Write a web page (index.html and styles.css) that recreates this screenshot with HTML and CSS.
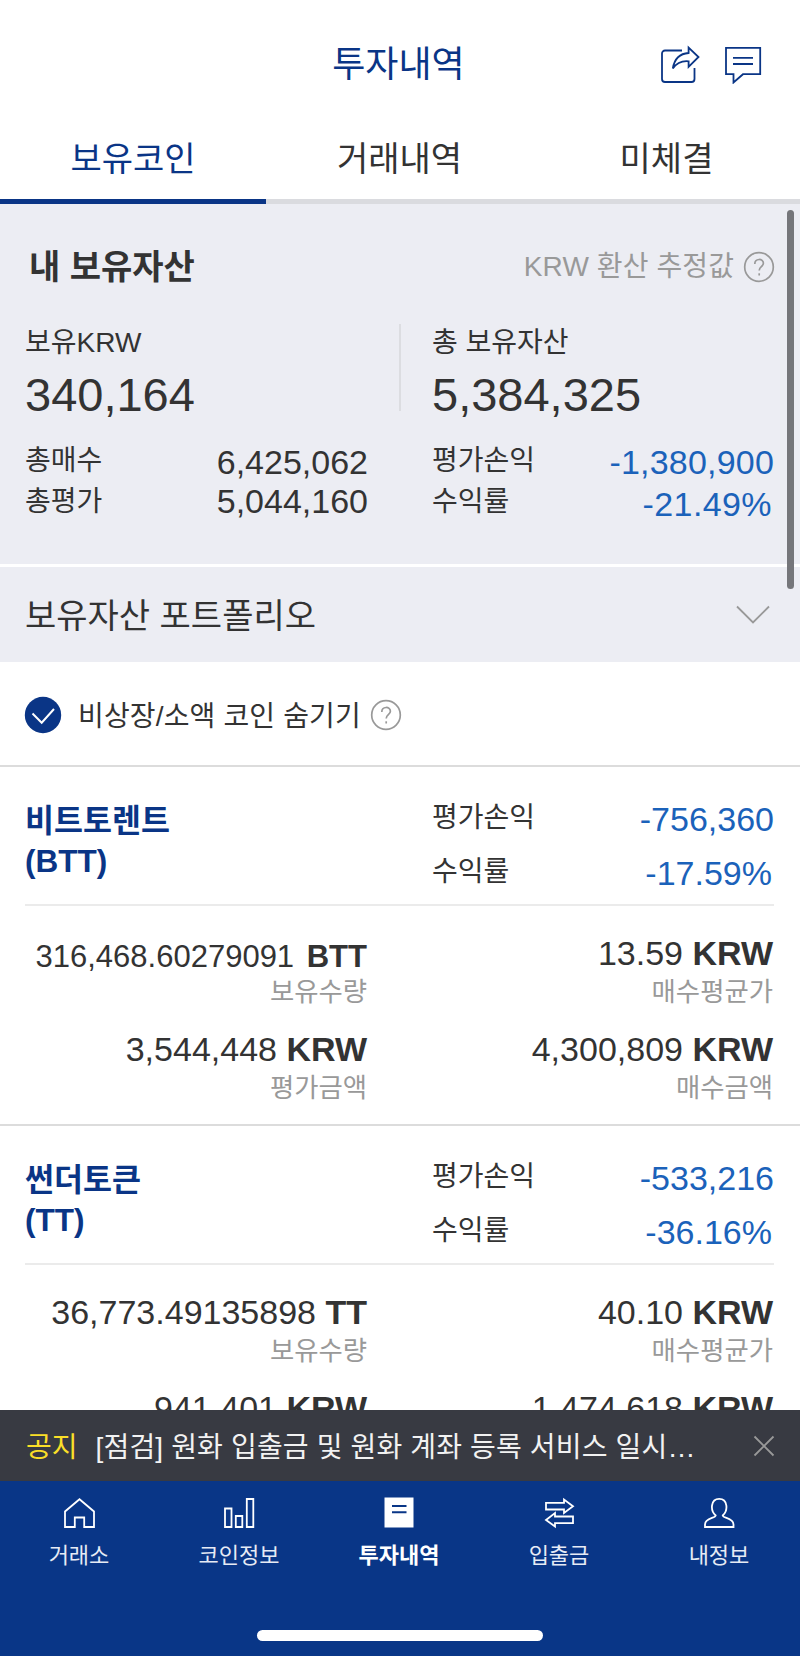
FILE: index.html
```html
<!DOCTYPE html>
<html lang="ko">

<head>
    <meta charset="UTF-8">
    <meta name="viewport" content="width=device-width, initial-scale=1.0">
    <title>투자내역</title>
    <link rel="stylesheet" href="styles.css">
</head>

<body>
    <header class="header">
        <h1 class="title">투자내역</h1>
        <div class="actions">
            <svg class="icon" width="40" height="40" viewBox="0 0 40 40">
                <path d="M22 6.500H5a3 3 0 0 0-3 3V35a3 3 0 0 0 3 3h26.500a3 3 0 0 0 3-3V24" />
                <path d="M12.800 24.500C14.500 14.500 20 9.500 28.600 9V3.500L38.500 13l-9.900 9.800v-5.500C21.500 16.600 17 18.500 12.800 24.500z" />
            </svg>
            <svg class="icon" width="40" height="40" viewBox="0 0 40 40">
                <path d="M2 3.800h34.200v26.400H19l-9.500 8.300v-8.300H2z" />
                <path d="M9 13.800h20M9 20h20" />
            </svg>
        </div>
    </header>

    <nav class="tabs">
        <a class="tab active">보유코인</a>
        <a class="tab">거래내역</a>
        <a class="tab">미체결</a>
    </nav>

    <main class="content">
        <section class="summary">
            <div class="summary-head">
                <h2>내 보유자산</h2>
                <span class="estimate">KRW 환산 추정값
                    <svg class="help" width="32" height="32" viewBox="0 0 32 32">
                        <circle cx="16" cy="16" r="14.300" />
                        <path d="M11.800 13c0-6 8.600-5.800 8.600-.8 0 3.500-4.200 3.500-4.200 7.300" />
                        <path d="M16.200 22.300v2.200" />
                    </svg>
                </span>
            </div>
            <div class="summary-grid">
                <div class="summary-col">
                    <div class="label">보유KRW</div>
                    <div class="total">340,164</div>
                    <div class="line"><span>총매수</span><b>6,425,062</b></div>
                    <div class="line second"><span>총평가</span><b>5,044,160</b></div>
                </div>
                <div class="separator"></div>
                <div class="summary-col">
                    <div class="label">총 보유자산</div>
                    <div class="total">5,384,325</div>
                    <div class="line"><span>평가손익</span><b class="down">-1,380,900</b></div>
                    <div class="line second"><span>수익률</span><b class="down rate">-21.49%</b></div>
                </div>
            </div>
        </section>

        <section class="portfolio">
            <span>보유자산 포트폴리오</span>
            <svg class="chevron" width="36" height="20" viewBox="0 0 36 20">
                <path d="M2 1.500l16 16 16-16" />
            </svg>
        </section>

        <div class="filter">
            <svg class="check" width="38" height="38" viewBox="0 0 38 38">
                <circle cx="19" cy="19" r="18.200" />
                <path d="M8.500 17.500l9.200 9.200L30 13" />
            </svg>
            <span>비상장/소액 코인 숨기기</span>
            <svg class="help" width="32" height="32" viewBox="0 0 32 32">
                <circle cx="16" cy="16" r="14.300" />
                <path d="M11.800 13c0-6 8.600-5.800 8.600-.8 0 3.500-4.200 3.500-4.200 7.300" />
                <path d="M16.200 22.300v2.200" />
            </svg>
        </div>

        <article class="coin">
            <div class="coin-head">
                <h3>비트토렌트<br>(BTT)</h3>
                <div class="profit">
                    <div class="row"><span>평가손익</span><b>-756,360</b></div>
                    <div class="row"><span>수익률</span><b class="rate">-17.59%</b></div>
                </div>
            </div>
            <div class="coin-body">
                <div class="cell">
                    <div class="amount small">316,468.60279091 <strong>BTT</strong></div>
                    <div class="caption">보유수량</div>
                </div>
                <div class="cell">
                    <div class="amount">13.59 <strong>KRW</strong></div>
                    <div class="caption">매수평균가</div>
                </div>
                <div class="cell">
                    <div class="amount">3,544,448 <strong>KRW</strong></div>
                    <div class="caption">평가금액</div>
                </div>
                <div class="cell">
                    <div class="amount">4,300,809 <strong>KRW</strong></div>
                    <div class="caption">매수금액</div>
                </div>
            </div>
        </article>

        <article class="coin">
            <div class="coin-head">
                <h3>썬더토큰<br>(TT)</h3>
                <div class="profit">
                    <div class="row"><span>평가손익</span><b>-533,216</b></div>
                    <div class="row"><span>수익률</span><b class="rate">-36.16%</b></div>
                </div>
            </div>
            <div class="coin-body">
                <div class="cell">
                    <div class="amount">36,773.49135898 <strong>TT</strong></div>
                    <div class="caption">보유수량</div>
                </div>
                <div class="cell">
                    <div class="amount">40.10 <strong>KRW</strong></div>
                    <div class="caption">매수평균가</div>
                </div>
                <div class="cell">
                    <div class="amount">941,401 <strong>KRW</strong></div>
                </div>
                <div class="cell">
                    <div class="amount">1,474,618 <strong>KRW</strong></div>
                </div>
            </div>
        </article>

        <div class="scrollbar"></div>
    </main>

    <div class="notice">
        <span class="notice-tag">공지</span>
        <span class="notice-text">[점검] 원화 입출금 및 원화 계좌 등록 서비스 일시…</span>
        <svg class="close" width="22" height="22" viewBox="0 0 22 22">
            <path d="M1.500 1.500l19 19M20.500 1.500l-19 19" />
        </svg>
    </div>

    <footer class="bottom">
        <nav class="menu">
            <a class="menu-item">
                <svg width="32" height="32" viewBox="0 0 32 32">
                    <path d="M2 30V14.500L16.500 2.200 31 14.500V30H21.200V20.500H11.800V30z" />
                </svg>
                <span>거래소</span>
            </a>
            <a class="menu-item">
                <svg width="32" height="32" viewBox="0 0 32 32">
                    <path d="M2 11.500h6.500V30H2zM12.800 19h6.500v11h-6.500zM23.800 2H30.300V30h-6.500z" />
                </svg>
                <span>코인정보</span>
            </a>
            <a class="menu-item selected">
                <svg width="32" height="32" viewBox="0 0 32 32">
                    <path class="fill" d="M1.500.5h29v30h-29z" />
                    <path class="cut" d="M9 9h14.500M9 15.200h14.500" />
                </svg>
                <span>투자내역</span>
            </a>
            <a class="menu-item">
                <svg width="32" height="32" viewBox="0 0 32 32">
                    <path d="M3 5.800H21V2.500L30 9.300 21 16V12.500H3z" />
                    <path d="M30 19.500H12V16L3 23 12 29.500V26.200H30z" />
                </svg>
                <span>입출금</span>
            </a>
            <a class="menu-item">
                <svg width="32" height="32" viewBox="0 0 32 32">
                    <path d="M12.700 18.500C7 13.500 7.500 1.800 16.200 1.800S25.300 13.500 19.700 18.500C20 21.500 30.500 20.500 30.500 27.500V30H2V27.500C2 20.500 12.500 21.500 12.700 18.500z" />
                </svg>
                <span>내정보</span>
            </a>
        </nav>
        <div class="home-indicator"></div>
    </footer>
</body>

</html>
```
FILE: styles.css
```css
* {
    box-sizing: border-box;
}

body {
    margin: 0;
    width: 800px;
    height: 1656px;
    display: flex;
    flex-direction: column;
    overflow: hidden;
    background: #fff;
    color: #333;
    font-family: "Liberation Sans", "Noto Sans CJK KR", sans-serif;
    font-size: 28px;
}

h1, h2, h3 {
    margin: 0;
}

b {
    font-weight: normal;
}

svg {
    display: block;
    flex: none;
    fill: none;
}

/* header */
.header {
    display: grid;
    grid-template-columns: 1fr auto 1fr;
    height: 112px;
    padding: 42px 36px 0 33px;
}

.title {
    grid-column: 2;
    font-size: 36px;
    font-weight: normal;
    line-height: 45px;
    color: #0a3586;
}

.actions {
    display: flex;
    justify-content: flex-end;
    gap: 24px;
    padding-top: 2px;
}

.icon {
    stroke: #0a3586;
    stroke-width: 1.8;
}

.tabs {
    display: grid;
    grid-template-columns: 266px 267px 267px;
    height: 92px;
    flex: none;
}

.tab {
    padding-top: 22px;
    border-bottom: 5px solid #dadbdf;
    font-size: 34px;
    line-height: 50px;
    text-align: center;
}

.tab.active {
    color: #0a3586;
    border-color: #0a3586;
}

/* asset summary */
.content {
    position: relative;
    height: 1206px;
    overflow: hidden;
}

.summary {
    height: 360px;
    padding: 41px 26px 0 25px;
    background: #ecedf3;
}

.summary-head {
    display: flex;
    justify-content: space-between;
    height: 44px;
    line-height: 44px;
}

.summary-head h2 {
    padding-left: 4px;
    font-size: 34px;
}

.estimate {
    display: flex;
    align-items: center;
    gap: 9px;
    margin-right: -1px;
    letter-spacing: 0.1px;
    color: #999;
}

.help {
    stroke: #999;
    stroke-width: 1.7;
}

.summary-grid {
    display: grid;
    grid-template-columns: 343px 64px 342px;
    padding-top: 35px;
}

.separator {
    width: 2px;
    height: 87px;
    margin-left: 31px;
    background: #dcdde1;
}

.label {
    height: 36px;
    line-height: 38px;
}

.total {
    height: 70px;
    font-size: 47px;
    line-height: 69px;
}

.line {
    display: flex;
    justify-content: space-between;
    height: 41px;
    line-height: 62px;
}

.line b {
    font-size: 34px;
    line-height: 65px;
}

.line.second b {
    line-height: 61px;
}

.line.second .rate {
    line-height: 66px;
    letter-spacing: 0.4px;
}

.line .down {
    color: #1b62ba;
    letter-spacing: 0.2px;
}

b.rate {
    margin-right: 2px;
}

.portfolio {
    display: flex;
    align-items: center;
    justify-content: space-between;
    height: 98px;
    padding: 0 29px 0 25px;
    border-top: 3px solid #fff;
    background: #ecedf3;
    font-size: 34px;
    line-height: 50px;
}

.portfolio span {
    padding-top: 2px;
}

.chevron {
    stroke: #999;
    stroke-width: 1.8;
}

.filter {
    display: flex;
    align-items: center;
    height: 105px;
    padding: 2px 0 0 24px;
    border-bottom: 2px solid #dcdcdc;
}

.filter span {
    margin: -2px 9px 0 16px;
    letter-spacing: 0.15px;
}

.check circle {
    fill: #0a3586;
}

.check path {
    stroke: #fff;
    stroke-width: 2;
}

/* coin list */
.coin {
    height: 359px;
    padding: 0 26px 0 25px;
    border-bottom: 2px solid #dcdcdc;
}

.coin-head {
    display: grid;
    grid-template-columns: 407px 342px;
    height: 139px;
    border-bottom: 2px solid #ebebeb;
}

.coin-head h3 {
    padding-top: 34px;
    font-size: 31.5px;
    line-height: 40px;
    color: #0a3586;
}

.profit {
    padding-top: 24px;
}

.row {
    display: flex;
    justify-content: space-between;
    height: 54px;
    line-height: 54px;
}

.row b {
    margin-top: 1px;
    font-size: 34px;
    color: #1b62ba;
}

.coin-body {
    display: grid;
    grid-template-columns: 342px 406px;
    padding-top: 26px;
    text-align: right;
}

.cell {
    height: 96px;
}

.amount {
    font-size: 34px;
    height: 42px;
    line-height: 42px;
}

.amount.small {
    font-size: 31px;
    line-height: 50px;
}

.amount.small strong {
    margin-left: 4px;
}

.caption {
    font-size: 26.4px;
    line-height: 36px;
    color: #999;
}

.scrollbar {
    position: absolute;
    top: 6px;
    right: 6px;
    width: 7px;
    height: 379px;
    border-radius: 4px;
    background: #75767a;
}

/* notice */
.notice {
    display: flex;
    align-items: center;
    height: 71px;
    padding: 0 25px 2px 26px;
    background: #383a42;
    color: #f2f2f2;
}

.notice-tag {
    margin-right: 18px;
    color: #fadf28;
}

.notice-text {
    letter-spacing: 0.16px;
}

.close {
    margin: 2px 0 0 auto;
    stroke: #999;
    stroke-width: 1.8;
}

/* bottom menu */
.bottom {
    height: 175px;
    background: #093687;
}

.menu {
    display: grid;
    grid-template-columns: repeat(5, 160px);
    height: 149px;
    margin-left: -1px;
}

.menu-item {
    display: flex;
    flex-direction: column;
    align-items: center;
    padding-top: 16px;
    font-size: 22px;
    line-height: 30px;
    color: #e6ebf5;
}

.menu-item svg {
    margin-bottom: 12px;
    stroke: #fff;
    stroke-width: 1.8;
}

.menu-item .fill {
    fill: #fff;
    stroke: none;
}

.menu-item .cut {
    stroke: #093687;
    stroke-width: 2;
}

.menu-item.selected {
    font-weight: bold;
    color: #fff;
}

.home-indicator {
    width: 286px;
    height: 11px;
    margin: 0 auto;
    border-radius: 6px;
    background: #fff;
}
```
